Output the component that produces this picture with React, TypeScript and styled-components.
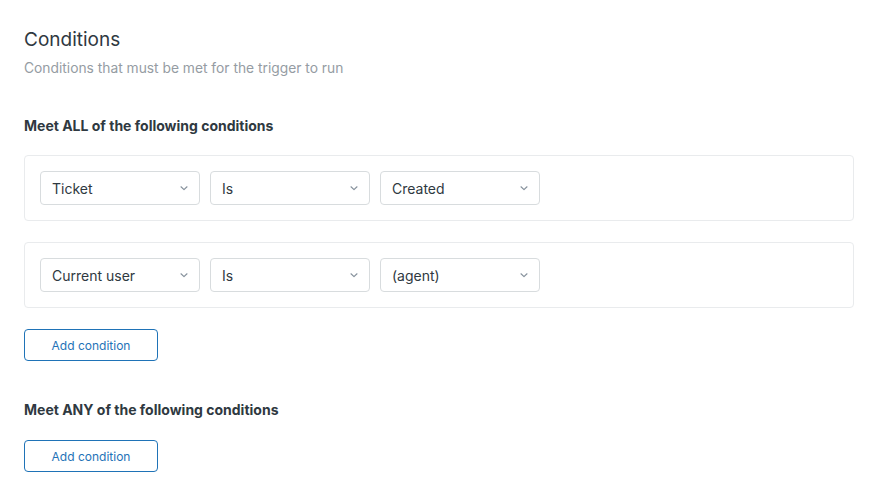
import React from "react";
import styled, { createGlobalStyle } from "styled-components";

const Global = createGlobalStyle`
  html, body { margin: 0; padding: 0; background: #fff; }
  body { font-family: Inter, "Noto Sans", "Liberation Sans", sans-serif; color: #2f3941; -webkit-font-smoothing: antialiased; }
`;

const Page = styled.div`
  padding: 28px 20px 0 24px;
  display: flex;
  flex-direction: column;
`;

const Title = styled.h1`
  margin: 0;
  font-size: 19px;
  line-height: 24px;
  font-weight: 400;
  color: #2f3941;
`;

const Subtitle = styled.p`
  margin: 6px 0 0;
  font-size: 13.8px;
  line-height: 20px;
  color: #959ca3;
`;

const SectionHeading = styled.h2<{ $top: number }>`
  margin: ${(p) => p.$top}px 0 0;
  font-size: 14px;
  line-height: 18px;
  font-weight: 700;
  color: #2f3941;
`;

const Card = styled.div<{ $top: number }>`
  margin-top: ${(p) => p.$top}px;
  height: 66px;
  box-sizing: border-box;
  border: 1px solid #e9ebed;
  border-radius: 4px;
  padding: 0 15px;
  display: flex;
  align-items: center;
  gap: 10px;
`;

const Select = styled.div`
  width: 160px;
  height: 34px;
  box-sizing: border-box;
  border: 1px solid #d8dcde;
  border-radius: 4px;
  padding: 0 10px 0 11px;
  display: flex;
  align-items: center;
  justify-content: space-between;
  font-size: 14px;
  color: #2f3941;
`;

const Chevron = styled.svg`
  width: 10px;
  height: 10px;
  flex: none;
`;

const Button = styled.button<{ $top: number }>`
  margin-top: ${(p) => p.$top}px;
  width: 134px;
  height: 32px;
  box-sizing: border-box;
  border: 1px solid #1f73b7;
  border-radius: 4px;
  background: #fff;
  color: #1f73b7;
  font-family: inherit;
  font-size: 12px;
  padding: 0;
  cursor: pointer;
`;

const Field = ({ label }: { label: string }) => (
  <Select>
    <span>{label}</span>
    <Chevron viewBox="0 0 10 10">
      <path d="M2 3.8 L5 6.6 L8 3.8" fill="none" stroke="#87929d" strokeWidth="1.2" strokeLinecap="round" strokeLinejoin="round" />
    </Chevron>
  </Select>
);

export default function App() {
  return (
    <>
      <Global />
      <Page>
        <Title>Conditions</Title>
        <Subtitle>Conditions that must be met for the trigger to run</Subtitle>
        <SectionHeading $top={39}>Meet ALL of the following conditions</SectionHeading>
        <Card $top={20}>
          <Field label="Ticket" />
          <Field label="Is" />
          <Field label="Created" />
        </Card>
        <Card $top={21}>
          <Field label="Current user" />
          <Field label="Is" />
          <Field label="(agent)" />
        </Card>
        <div>
          <Button $top={21}>Add condition</Button>
        </div>
        <SectionHeading $top={40}>Meet ANY of the following conditions</SectionHeading>
        <div>
          <Button $top={21}>Add condition</Button>
        </div>
      </Page>
    </>
  );
}
